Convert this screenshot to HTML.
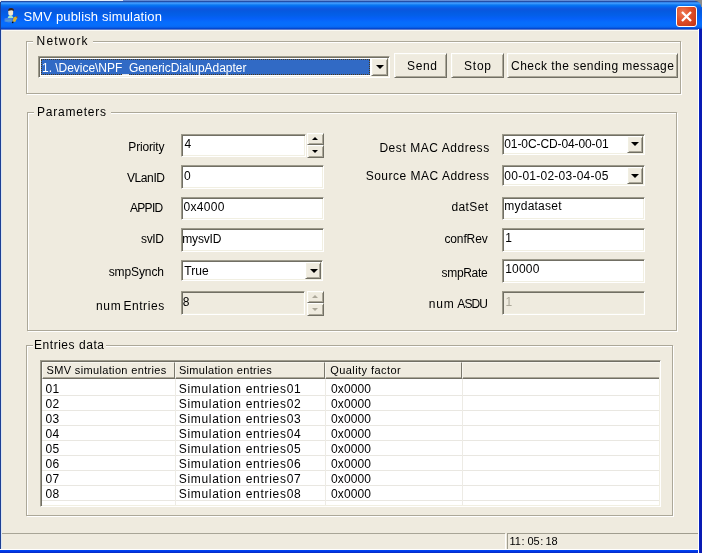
<!DOCTYPE html>
<html><head><meta charset="utf-8"><title>SMV publish simulation</title>
<style>
html,body{margin:0;padding:0}
body{width:702px;height:553px;overflow:hidden;position:relative;background:#efebdf;font-family:"Liberation Sans",sans-serif;font-size:12px}
div,span,svg{position:absolute;box-sizing:border-box}
.t{white-space:pre;line-height:1;font-family:"Liberation Sans",sans-serif}
#title{left:0;top:0;width:702px;height:30px;background:linear-gradient(to bottom,#6a92d8 0,#5f88d2 0.8px,#234ea8 1.5px,#2a6fd8 2.1px,#3a96fc 2.8px,#3a96fc 3.6px,#0a78f2 5px,#0463ee 7px,#0e55de 9px,#0659e0 11px,#035fe8 15px,#0660f8 18.5px,#066cfc 22px,#066efc 25px,#0868f2 27px,#0348d0 28.5px,#0a3cc0 29.2px,#efebdf 30px)}
#bl{left:0;top:30px;width:2px;height:520px;background:linear-gradient(to right,#1c3f94 0,#1c3f94 1px,#dce6f4 1px,#dce6f4 2px)}
#br{left:698px;top:29px;width:4px;height:524px;background:linear-gradient(to right,#fff 0,#fff 1px,#0a2cc4 1px,#0818b8 2px,#0a1cb0 4px)}
#bb{left:0;top:549px;width:702px;height:4px;background:linear-gradient(to bottom,#fff 0,#fff 1px,#0046f4 1px,#0038e4 2.5px,#0a28c0 4px)}
.cornl{left:0;top:0;width:3px;height:3px;background:radial-gradient(circle at 100% 100%,transparent 2.4px,#f4f4f4 3px)}
.cornr{left:695px;top:0;width:7px;height:7px;background:radial-gradient(circle at 0 100%,transparent 5.6px,#8c8c8c 6.6px)}
#close{left:676px;top:6px;width:21px;height:21px;border:1px solid #fff;border-radius:3px;background:radial-gradient(circle at 30% 30%,#ee7a54 0,#e04e28 45%,#c03212 100%)}
.gb{border:1px solid #aca899;box-shadow:inset 1px 1px 0 #fff,1px 1px 0 #fff}
.gl{background:#efebdf;height:3px}
.sunken{border:1px solid;border-color:#9d9a8b #fff #fff #9d9a8b;box-shadow:inset 1px 1px 0 #716f64,inset -1px -1px 0 #f1efe2;background:#fff}
.dis{background:#efebdf}
.raised{border:1px solid;border-color:#fff #716f64 #716f64 #fff;box-shadow:inset 1px 1px 0 #f1efe2,inset -1px -1px 0 #aca899;background:#efebdf}
.arr{width:0;height:0;border-left:4px solid transparent;border-right:4px solid transparent;border-top:4px solid #000}
.arrs{width:0;height:0;border-left:3px solid transparent;border-right:3px solid transparent}
.hl{background:#316ac5;outline:1px dotted #4a3818;outline-offset:-1px}
.hdr{background:#efebdf;border:1px solid;border-color:#f8f6ef #7a786c #716f64 #f8f6ef;box-shadow:inset 0 -1px 0 #aca899}
.hline{height:1px;background:#e9e7e1;left:42px;width:617px}
.vline{width:1px;background:#edebe5;top:379px;height:126px}
#txt{left:0;top:0;width:702px;height:553px;will-change:transform}

</style></head>
<body>
<div id="title"></div>
<div style="left:2px;top:0;width:121px;height:1px;background:#e4ecfa"></div><div class="cornl"></div><div class="cornr"></div>
<div style="left:1px;top:30px;width:698px;height:1px;background:#fbf9f2"></div><div id="bl"></div><div id="bb"></div><div id="br"></div><div id="tl" style="left:0;top:2px;width:1px;height:28px;background:#1c3f94"></div>
<svg id="icon" style="left:0;top:4px" width="24" height="24" viewBox="0 0 24 24">
<path d="M4.6 14.6 Q8 13.2 12.6 14 L12.4 18 Q8 19 4.4 17.6Z" fill="#4a84e4"/>
<path d="M5.5 16 L11.5 15.6 L11.5 17.2 L5.5 17.4Z" fill="#58a8c8" opacity=".7"/>
<path d="M7.8 13.9 Q7.8 11.4 10.5 11.4 Q13.2 11.4 13.2 13.9 Z" fill="#a4eac6"/>
<rect x="8.3" y="5.6" width="4.8" height="6.2" rx="2" fill="#f3e8d0"/>
<path d="M8.2 7 Q8 4 11.1 4 Q14.2 4 13.9 6.8 Q11.5 5.6 8.2 7Z" fill="#3c2416"/>
<path d="M12.4 17.4 L13.6 13.2 L16.4 12.4 L17.3 14 L15.2 17.9Z" fill="#dcb22e"/>
<path d="M15.8 12.4 L17.4 12.2 L17.6 13.8 L16.8 14Z" fill="#8a5620"/>
<circle cx="12.7" cy="18.4" r="0.8" fill="#101010"/>
</svg>
<div id="close"><svg style="left:0;top:0" width="19" height="19" viewBox="0 0 19 19"><path d="M5 5 L14 14 M14 5 L5 14" stroke="#fff" stroke-width="2.3" stroke-linecap="butt"/></svg></div>

<!-- group boxes -->
<div class="gb" style="left:26px;top:41px;width:655px;height:53px"></div>
<div class="gl" style="left:33px;top:40px;width:60px"></div>
<div class="gb" style="left:27px;top:112px;width:650px;height:219px"></div>
<div class="gl" style="left:34px;top:111px;width:77px"></div>
<div class="gb" style="left:26px;top:345px;width:647px;height:171px"></div>
<div class="gl" style="left:33px;top:344px;width:73px"></div>

<!-- network combo -->
<div class="sunken" style="left:38px;top:56px;width:352px;height:22px"></div>
<div class="hl" style="left:41px;top:59px;width:329px;height:16px"></div>
<div class="raised" style="left:371px;top:58px;width:17px;height:18px"></div>
<div class="arr" style="left:375.5px;top:65px"></div>
<!-- buttons -->
<div class="raised" style="left:394px;top:53px;width:53px;height:25px"></div>
<div class="raised" style="left:451px;top:53px;width:53px;height:25px"></div>
<div class="raised" style="left:507px;top:53px;width:171px;height:25px"></div>

<!-- left inputs -->
<div class="sunken" style="left:181px;top:134px;width:125px;height:23px"></div>
<div class="raised" style="left:307px;top:133px;width:17px;height:12px"></div>
<div class="raised" style="left:307px;top:145px;width:17px;height:13px"></div>
<div class="arrs" style="left:312px;top:137px;border-bottom:3px solid #000"></div>
<div class="arrs" style="left:312px;top:150px;border-top:3px solid #000"></div>
<div class="sunken" style="left:181px;top:165px;width:143px;height:24px"></div>
<div class="sunken" style="left:181px;top:197px;width:143px;height:23px"></div>
<div class="sunken" style="left:181px;top:228px;width:143px;height:24px"></div>
<div class="sunken" style="left:181px;top:260px;width:142px;height:21px"></div>
<div class="raised" style="left:305px;top:262px;width:16px;height:17px"></div>
<div class="arr" style="left:309.5px;top:268.5px"></div>
<div class="sunken dis" style="left:181px;top:291px;width:124px;height:24px"></div>
<div class="raised" style="left:307px;top:291px;width:17px;height:12px"></div>
<div class="raised" style="left:307px;top:303px;width:17px;height:13px"></div>
<div class="arrs" style="left:312px;top:295px;border-bottom:3px solid #aca899"></div>
<div class="arrs" style="left:312px;top:308px;border-top:3px solid #aca899"></div>

<!-- right inputs -->
<div class="sunken" style="left:502px;top:134px;width:143px;height:21px"></div>
<div class="raised" style="left:627px;top:136px;width:16px;height:17px"></div>
<div class="arr" style="left:631px;top:142px"></div>
<div class="sunken" style="left:502px;top:165px;width:143px;height:21px"></div>
<div class="raised" style="left:627px;top:167px;width:16px;height:17px"></div>
<div class="arr" style="left:631px;top:173.5px"></div>
<div class="sunken" style="left:502px;top:197px;width:143px;height:23px"></div>
<div class="sunken" style="left:502px;top:228px;width:143px;height:24px"></div>
<div class="sunken" style="left:502px;top:259px;width:143px;height:24px"></div>
<div class="sunken dis" style="left:502px;top:291px;width:143px;height:24px"></div>

<!-- list -->
<div class="sunken" style="left:40px;top:360px;width:621px;height:147px"></div>
<div class="hdr" style="left:42px;top:362px;width:133px;height:17px"></div>
<div class="hdr" style="left:175px;top:362px;width:150px;height:17px"></div>
<div class="hdr" style="left:325px;top:362px;width:137px;height:17px"></div>
<div class="hdr" style="left:462px;top:362px;width:197px;height:17px;border-right:0;box-shadow:inset 0 -1px 0 #aca899"></div>
<div class="hline" style="top:395px"></div><div class="hline" style="top:410px"></div><div class="hline" style="top:425px"></div><div class="hline" style="top:440px"></div>
<div class="hline" style="top:455px"></div><div class="hline" style="top:470px"></div><div class="hline" style="top:485px"></div><div class="hline" style="top:500px"></div>
<div class="vline" style="left:175px"></div><div class="vline" style="left:325px"></div><div class="vline" style="left:462px"></div>

<!-- status bar -->
<div style="left:2px;top:533px;width:503px;height:1px;background:#a8a597"></div>
<div style="left:505px;top:534px;width:1px;height:15px;background:#fff"></div>
<div style="left:507px;top:533px;width:191px;height:1px;background:#a09d8f"></div>
<div style="left:507px;top:533px;width:1px;height:16px;background:#a09d8f"></div>

<div id="txt">
<span class="t" style="left:23.5px;top:10.0px;font-size:13px;color:#fff;letter-spacing:0.16px;">SMV publish simulation</span>
<span class="t" style="left:36.6px;top:35.0px;font-size:12px;color:#000;letter-spacing:1.16px;">Network</span>
<span class="t" style="left:37.0px;top:106.0px;font-size:12px;color:#000;letter-spacing:0.77px;">Parameters</span>
<span class="t" style="left:34.0px;top:339.0px;font-size:12px;color:#000;letter-spacing:0.54px;">Entries data</span>
<span class="t" style="left:42.0px;top:62.0px;font-size:12px;color:#fff;letter-spacing:-0.03px;">1. \Device\NPF_GenericDialupAdapter</span>
<span class="t" style="left:407.0px;top:60.0px;font-size:12px;color:#000;letter-spacing:0.66px;">Send</span>
<span class="t" style="left:464.0px;top:60.0px;font-size:12px;color:#000;letter-spacing:0.77px;">Stop</span>
<span class="t" style="left:511.0px;top:60.0px;font-size:12px;color:#000;letter-spacing:0.48px;">Check the sending message</span>
<span class="t" style="left:128.3px;top:141.0px;font-size:12px;color:#000;letter-spacing:-0.16px;">Priority</span>
<span class="t" style="left:127.0px;top:172.0px;font-size:12px;color:#000;letter-spacing:-0.41px;">VLanID</span>
<span class="t" style="left:130.0px;top:202.0px;font-size:12px;color:#000;letter-spacing:-0.70px;">APPID</span>
<span class="t" style="left:141.0px;top:233.0px;font-size:12px;color:#000;letter-spacing:-0.33px;">svID</span>
<span class="t" style="left:108.7px;top:266.0px;font-size:12px;color:#000;letter-spacing:-0.10px;">smpSynch</span>
<span class="t" style="left:95.9px;top:300.0px;font-size:12px;color:#000;letter-spacing:0.73px;">num</span>
<span class="t" style="left:123.4px;top:300.0px;font-size:12px;color:#000;letter-spacing:0.57px;">Entries</span>
<span class="t" style="left:379.4px;top:142.0px;font-size:12px;color:#000;letter-spacing:0.56px;">Dest MAC Address</span>
<span class="t" style="left:365.7px;top:170.0px;font-size:12px;color:#000;letter-spacing:0.50px;">Source MAC Address</span>
<span class="t" style="left:451.6px;top:201.0px;font-size:12px;color:#000;letter-spacing:0.34px;">datSet</span>
<span class="t" style="left:444.4px;top:233.0px;font-size:12px;color:#000;letter-spacing:-0.12px;">confRev</span>
<span class="t" style="left:441.5px;top:267.0px;font-size:12px;color:#000;letter-spacing:-0.31px;">smpRate</span>
<span class="t" style="left:428.8px;top:298.0px;font-size:12px;color:#000;letter-spacing:0.78px;">num</span>
<span class="t" style="left:457.3px;top:298.0px;font-size:12px;color:#000;letter-spacing:-0.88px;">ASDU</span>
<span class="t" style="left:184.5px;top:138.0px;font-size:12px;color:#000;letter-spacing:0.00px;">4</span>
<span class="t" style="left:184.0px;top:170.0px;font-size:12px;color:#000;letter-spacing:0.00px;">0</span>
<span class="t" style="left:183.5px;top:201.0px;font-size:12px;color:#000;letter-spacing:0.33px;">0x4000</span>
<span class="t" style="left:182.3px;top:233.0px;font-size:12px;color:#000;letter-spacing:-0.20px;">mysvID</span>
<span class="t" style="left:184.3px;top:265.0px;font-size:12px;color:#000;letter-spacing:0.09px;">True</span>
<span class="t" style="left:182.8px;top:296.0px;font-size:12px;color:#000;letter-spacing:0.00px;">8</span>
<span class="t" style="left:504.3px;top:138.0px;font-size:12px;color:#000;letter-spacing:-0.10px;">01-0C-CD-04-00-01</span>
<span class="t" style="left:504.3px;top:170.0px;font-size:12px;color:#000;letter-spacing:0.25px;">00-01-02-03-04-05</span>
<span class="t" style="left:504.3px;top:200.0px;font-size:12px;color:#000;letter-spacing:0.23px;">mydataset</span>
<span class="t" style="left:505.3px;top:232.0px;font-size:12px;color:#000;letter-spacing:0.00px;">1</span>
<span class="t" style="left:505.2px;top:263.0px;font-size:12px;color:#000;letter-spacing:0.21px;">10000</span>
<span class="t" style="left:505.4px;top:296.0px;font-size:12px;color:#aca899;letter-spacing:0.00px;">1</span>
<span class="t" style="left:46.5px;top:365.0px;font-size:11px;color:#000;letter-spacing:0.35px;">SMV simulation entries</span>
<span class="t" style="left:178.9px;top:365.0px;font-size:11px;color:#000;letter-spacing:0.32px;">Simulation entries</span>
<span class="t" style="left:330.2px;top:365.0px;font-size:11px;color:#000;letter-spacing:0.44px;">Quality factor</span>
<span class="t" style="left:45.6px;top:383.0px;font-size:12px;color:#000;letter-spacing:0.24px;">01</span>
<span class="t" style="left:178.7px;top:383.0px;font-size:12px;color:#000;letter-spacing:0.70px;">Simulation entries01</span>
<span class="t" style="left:331.0px;top:383.0px;font-size:12px;color:#000;letter-spacing:0.12px;">0x0000</span>
<span class="t" style="left:45.6px;top:398.0px;font-size:12px;color:#000;letter-spacing:0.24px;">02</span>
<span class="t" style="left:178.7px;top:398.0px;font-size:12px;color:#000;letter-spacing:0.70px;">Simulation entries02</span>
<span class="t" style="left:331.0px;top:398.0px;font-size:12px;color:#000;letter-spacing:0.12px;">0x0000</span>
<span class="t" style="left:45.6px;top:413.0px;font-size:12px;color:#000;letter-spacing:0.24px;">03</span>
<span class="t" style="left:178.7px;top:413.0px;font-size:12px;color:#000;letter-spacing:0.70px;">Simulation entries03</span>
<span class="t" style="left:331.0px;top:413.0px;font-size:12px;color:#000;letter-spacing:0.12px;">0x0000</span>
<span class="t" style="left:45.6px;top:428.0px;font-size:12px;color:#000;letter-spacing:0.24px;">04</span>
<span class="t" style="left:178.7px;top:428.0px;font-size:12px;color:#000;letter-spacing:0.70px;">Simulation entries04</span>
<span class="t" style="left:331.0px;top:428.0px;font-size:12px;color:#000;letter-spacing:0.12px;">0x0000</span>
<span class="t" style="left:45.6px;top:443.0px;font-size:12px;color:#000;letter-spacing:0.24px;">05</span>
<span class="t" style="left:178.7px;top:443.0px;font-size:12px;color:#000;letter-spacing:0.70px;">Simulation entries05</span>
<span class="t" style="left:331.0px;top:443.0px;font-size:12px;color:#000;letter-spacing:0.12px;">0x0000</span>
<span class="t" style="left:45.6px;top:458.0px;font-size:12px;color:#000;letter-spacing:0.24px;">06</span>
<span class="t" style="left:178.7px;top:458.0px;font-size:12px;color:#000;letter-spacing:0.70px;">Simulation entries06</span>
<span class="t" style="left:331.0px;top:458.0px;font-size:12px;color:#000;letter-spacing:0.12px;">0x0000</span>
<span class="t" style="left:45.6px;top:473.0px;font-size:12px;color:#000;letter-spacing:0.24px;">07</span>
<span class="t" style="left:178.7px;top:473.0px;font-size:12px;color:#000;letter-spacing:0.70px;">Simulation entries07</span>
<span class="t" style="left:331.0px;top:473.0px;font-size:12px;color:#000;letter-spacing:0.12px;">0x0000</span>
<span class="t" style="left:45.6px;top:488.0px;font-size:12px;color:#000;letter-spacing:0.24px;">08</span>
<span class="t" style="left:178.7px;top:488.0px;font-size:12px;color:#000;letter-spacing:0.70px;">Simulation entries08</span>
<span class="t" style="left:331.0px;top:488.0px;font-size:12px;color:#000;letter-spacing:0.12px;">0x0000</span>
<span class="t" style="left:509.4px;top:536.0px;font-size:11px;color:#000;letter-spacing:0.00px;">11</span>
<span class="t" style="left:521.6px;top:536.0px;font-size:11px;color:#000;letter-spacing:0.00px;">:</span>
<span class="t" style="left:527.4px;top:536.0px;font-size:11px;color:#000;letter-spacing:0.00px;">05</span>
<span class="t" style="left:540.3px;top:536.0px;font-size:11px;color:#000;letter-spacing:0.00px;">:</span>
<span class="t" style="left:545.4px;top:536.0px;font-size:11px;color:#000;letter-spacing:0.00px;">18</span>
</div>
</body></html>
